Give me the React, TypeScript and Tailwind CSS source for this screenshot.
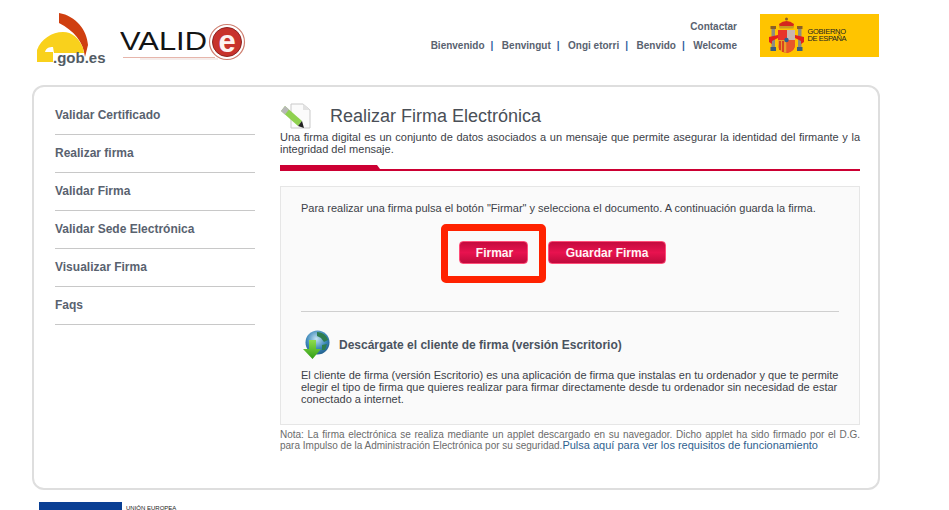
import React from "react";

const sans = { fontFamily: '"Liberation Sans", Arial, sans-serif' };

function GobLogo() {
  return (
    <svg width="72" height="56" viewBox="0 0 72 56" className="block">
      <path d="M24 1 C41 4 52 18 53 33 L50 45 C48 29 39 19 24 11 Z" fill="#cf3f10" />
      <path d="M2 50 L2 38 C6 27 17 20 28 20 C37 20 44 26 48 36 L49 41 L19 41 L18 35 C14 35 11 36 10 40 L18 40 L18 50 Z" fill="#f9d11c" />
      <text x="18" y="50.5" fontSize="15" fontWeight="700" fill="#525c64" style={sans}>.gob.es</text>
    </svg>
  );
}

function ValideLogo() {
  return (
    <svg width="128" height="50" viewBox="0 0 128 50" className="block">
      <text x="0" y="30" fontSize="25" fill="#141414" style={sans} textLength="87" lengthAdjust="spacingAndGlyphs">VALID</text>
      <rect x="3" y="37" width="92" height="1" fill="#e6b5ab" />
      <rect x="20" y="38.5" width="78" height="1" fill="#ecdcd8" />
      <circle cx="107" cy="22" r="17.5" fill="#ffffff" stroke="#cf7f70" strokeWidth="1.2" />
      <circle cx="107" cy="22" r="14.5" fill="#c8322c" stroke="#8c2420" strokeWidth="1" />
      <text x="107" y="32" textAnchor="middle" fontSize="31" fontWeight="700" fill="#fdf3f2" style={sans}>e</text>
    </svg>
  );
}

function GobiernoLogo() {
  return (
    <div className="flex h-[43px] w-[119px] items-center bg-[#ffc400]">
      <svg width="119" height="43" viewBox="0 0 119 43" className="block">
        <rect x="11.5" y="15" width="3.5" height="18" fill="#8f8b80" />
        <rect x="38" y="15" width="3.5" height="18" fill="#8f8b80" />
        <rect x="10.5" y="12" width="5.5" height="3" fill="#8a5f26" />
        <rect x="37" y="12" width="5.5" height="3" fill="#8a5f26" />
        <rect x="10.5" y="33" width="5.5" height="4" fill="#3b5d7e" />
        <rect x="37" y="33" width="5.5" height="4" fill="#3b5d7e" />
        <path d="M9 23 L18 21 L18 24 L12 27 L12 30 L9 28 Z M35 21 L44 23 L44 28 L41 30 L41 27 L35 24 Z" fill="#e3201b" />
        <path d="M19 10 Q26.5 4 34 10 L33 14 L20 14 Z" fill="#d4261d" />
        <rect x="19.5" y="12" width="14" height="2.5" fill="#c89a22" />
        <circle cx="26.5" cy="5" r="1.5" fill="#8a5f26" />
        <path d="M18 16 H35 V30 Q35 38 26.5 39 Q18 38 18 30 Z" fill="#e8332a" />
        <rect x="27" y="16" width="8" height="10" fill="#c9b6b0" />
        <path d="M18 26 H26.5 V39 Q18 38 18 30 Z" fill="#e8a02a" />
        <path d="M20 27 V36 M23 27 V38" stroke="#d4261d" strokeWidth="1.5" />
        <path d="M27 26 H35 V30 Q35 37 27 39 Z" fill="#e8572a" />
        <circle cx="26.5" cy="26" r="2.2" fill="#2d5d92" />
        <text x="47.5" y="19.5" fontSize="7.5" fill="#222" style={sans} textLength="38.5">GOBIERNO</text>
        <text x="47.5" y="27" fontSize="7.5" fill="#222" style={sans} textLength="39">DE ESPAÑA</text>
      </svg>
    </div>
  );
}

function PencilIcon() {
  return (
    <svg width="32" height="26" viewBox="0 0 32 26" className="block">
      <path d="M11 1 H23 L30 7 V25 H11 Z" fill="#fbfbfb" stroke="#c9c9c9" strokeWidth="1" />
      <path d="M23 1 V7 H30 Z" fill="#e2e2e2" />
      <path d="M1 8 L5 3 L22 18 L18 23 Z" fill="#8fd14f" />
      <path d="M1 8 L5 3 L9 6.5 L5 11.5 Z" fill="#b8b8b8" />
      <path d="M18 23 L22 18 L24 25 Z" fill="#222" />
    </svg>
  );
}

function GlobeIcon() {
  return (
    <svg width="28" height="30" viewBox="0 0 28 30" className="block">
      <defs>
        <radialGradient id="gl" cx="45%" cy="35%" r="70%">
          <stop offset="0%" stopColor="#c4e3f2" />
          <stop offset="60%" stopColor="#3a86b8" />
          <stop offset="100%" stopColor="#1e5a86" />
        </radialGradient>
        <linearGradient id="ar" x1="0" y1="0" x2="0" y2="1">
          <stop offset="0%" stopColor="#8fdc4e" />
          <stop offset="100%" stopColor="#2f9e14" />
        </linearGradient>
      </defs>
      <circle cx="15.5" cy="12.5" r="12" fill="url(#gl)" />
      <path d="M15 2 C21 2 25 6 26 10 L22 12 L19 8 L15 6 Z M20 15 L25 14 L23 20 L20 20 Z" fill="#2f7d4e" />
      <path d="M7 10 H14 V19 H19 L10.5 29 L1 19 H7 Z" fill="url(#ar)" />
    </svg>
  );
}

function RedButton({ children, className }: { children: React.ReactNode; className: string }) {
  return (
    <button
      className={`flex h-[23px] items-center justify-center rounded-[4px] border border-[#ff4d79] bg-gradient-to-b from-[#c40a3e] via-[#e8124f] to-[#bf0a3c] text-[12px] font-bold text-[#fff4f6] ${className}`}
      style={sans}
    >
      {children}
    </button>
  );
}

const menu = ["Validar Certificado", "Realizar firma", "Validar Firma", "Validar Sede Electrónica", "Visualizar Firma", "Faqs"];
const langs = ["Bienvenido", "Benvingut", "Ongi etorri", "Benvido"];

export default function App() {
  return (
    <div className="h-[510px] w-[949px] overflow-hidden bg-white text-[#333]" style={sans}>
      <header className="flex h-[85px]">
        <div className="ml-[35px] mt-[12px]"><GobLogo /></div>
        <div className="ml-[13px] mt-[20px]"><ValideLogo /></div>
        <div className="ml-[183px] mt-[21px] flex w-[306px] flex-col items-end whitespace-nowrap text-[10px] font-bold leading-[12px] text-[#59626f]">
          <span>Contactar</span>
          <div className="mt-[7px] flex">
            {langs.map((l) => (
              <span key={l} className="flex">
                {l}
                <span className="ml-[6px] mr-[8.5px] text-[#2f5f9e]">|</span>
              </span>
            ))}
            <span>Welcome</span>
          </div>
        </div>
        <div className="ml-[23px] mt-[14px]"><GobiernoLogo /></div>
      </header>

      <main className="ml-[32px] flex h-[405px] w-[848px] rounded-[12px] border-2 border-[#dedede] bg-white">
        <nav className="ml-[21px] mt-[10px] w-[200px]">
          {menu.map((m) => (
            <div key={m} className="flex h-[38px] items-center border-b border-[#c8c8c8] pb-[2px] text-[12px] font-bold text-[#59626f]">
              {m}
            </div>
          ))}
        </nav>
        <section className="ml-[25px] w-[580px]">
          <div className="mt-[14px] flex h-[30px] items-center">
            <PencilIcon />
            <h1 className="ml-[18px] text-[18px] font-normal leading-[26px] text-[#4a4f57]">Realizar Firma Electrónica</h1>
          </div>
          <p className="text-justify text-[11px] leading-[12px] text-[#3c4148]">
            Una firma digital es un conjunto de datos asociados a un mensaje que permite asegurar la identidad del firmante y la integridad del mensaje.
          </p>
          <div className="mt-[10px] h-[6px] border-b-2 border-[#cc0033]">
            <div className="h-[4px] w-[100px] bg-[#cc0033] [clip-path:polygon(0_0,97%_0,100%_100%,0_100%)]" />
          </div>
          <div className="mt-[15px] h-[239px] border border-[#e6e6e6] bg-[#fafafa] px-[20px]">
            <p className="mt-[15px] text-[11px] leading-[12px] text-[#3c4148]">
              Para realizar una firma pulsa el botón "Firmar" y selecciona el documento. A continuación guarda la firma.
            </p>
            <div className="relative ml-[158px] mt-[27px] flex gap-[20px]">
              <RedButton className="w-[69px] pl-[2px]">Firmar</RedButton>
              <RedButton className="w-[118px]">Guardar Firma</RedButton>
              <div className="absolute -left-[18px] -top-[17px] h-[59px] w-[105px] rounded-[5px] border-[7px] border-[#ff2200]" />
            </div>
            <div className="mt-[47px] border-t border-[#cfcfcf]" />
            <div className="ml-[1px] mt-[18px] flex h-[30px] items-center">
              <GlobeIcon />
              <h2 className="ml-[9px] text-[12px] font-bold text-[#4a5360]">Descárgate el cliente de firma (versión Escritorio)</h2>
            </div>
            <p className="mt-[9px] text-[11px] leading-[12px] text-[#3c4148]">
              El cliente de firma (versión Escritorio) es una aplicación de firma que instalas en tu ordenador y que te permite elegir el tipo de firma que quieres realizar para firmar directamente desde tu ordenador sin necesidad de estar conectado a internet.
            </p>
          </div>
          <p className="mt-[4px] text-justify text-[10px] leading-[11px] text-[#6b6b6b]">
            Nota: La firma electrónica se realiza mediante un applet descargado en su navegador. Dicho applet ha sido firmado por el D.G. para Impulso de la Administración Electrónica por su seguridad.<span className="text-[11px] text-[#2f5f8f]">Pulsa aquí para ver los requisitos de funcionamiento</span>
          </p>
        </section>
      </main>

      <footer className="ml-[39px] mt-[12px] flex">
        <div className="h-[30px] w-[83px] bg-[#0a3f94]" />
        <span className="ml-[4px] mt-[3px] text-[6px] leading-[7px] text-[#222]">UNIÓN EUROPEA</span>
      </footer>
    </div>
  );
}
